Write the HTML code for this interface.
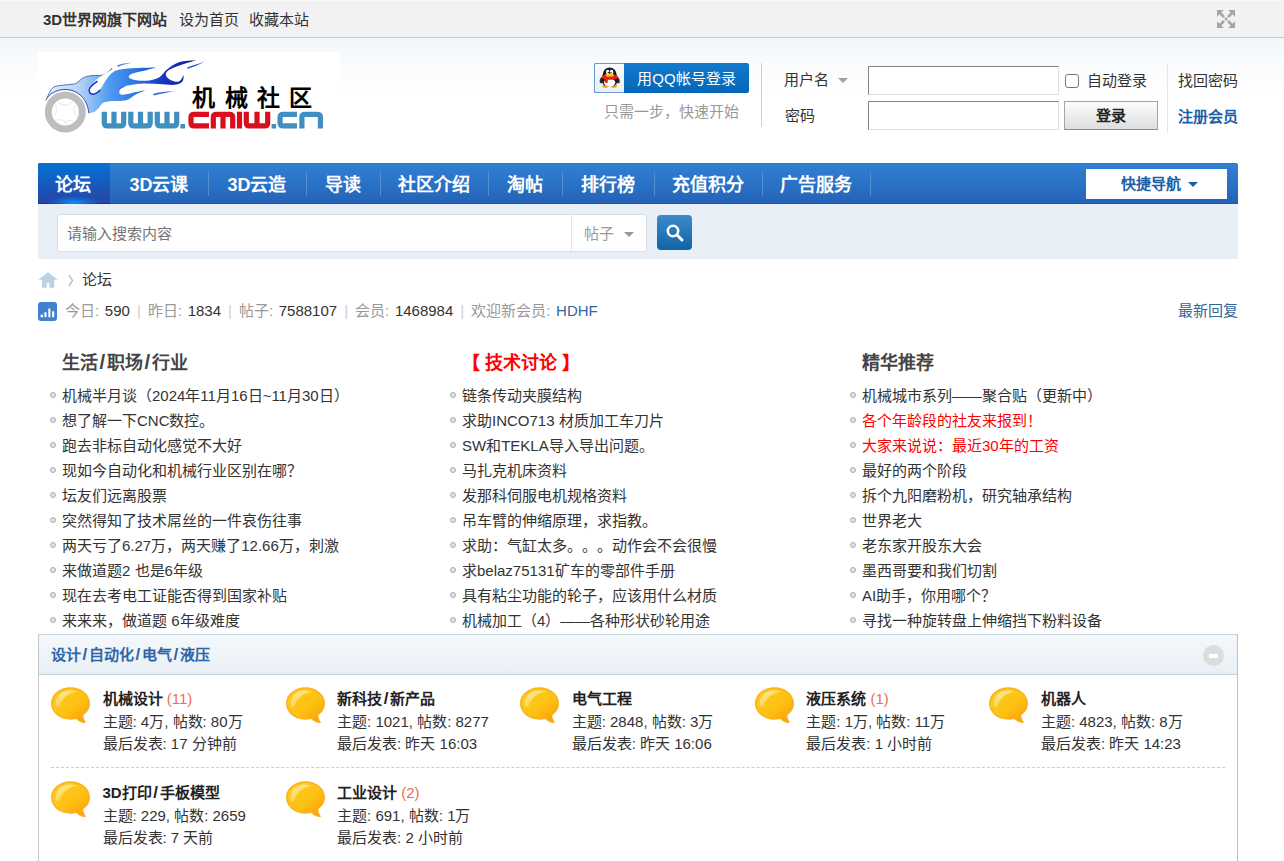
<!DOCTYPE html>
<html lang="zh-CN">
<head>
<meta charset="utf-8">
<title>机械社区</title>
<style>
*{margin:0;padding:0;box-sizing:border-box;}
html,body{width:1284px;height:861px;overflow:hidden;background:#fff;}
body{position:relative;text-spacing-trim:space-all;font-feature-settings:"halt" 0,"chws" 0,"vhal" 0;font-family:"Liberation Sans",sans-serif;font-size:15px;color:#333;line-height:22px;}
a{color:inherit;text-decoration:none;}
.abs{position:absolute;white-space:nowrap;}
b,strong{font-weight:bold;}

/* top bar */
#topbar{position:absolute;left:0;top:0;width:1284px;height:38px;background:#f2f2f2;border-bottom:1px solid #c9c9c9;border-top:1px solid #f8f8f8;}
#topbar .t{position:absolute;top:0;height:36px;line-height:37px;white-space:nowrap;color:#333;}
#hdbg{position:absolute;left:0;top:38px;width:1284px;height:52px;background:linear-gradient(#f3f7fa,#ffffff);}

/* login */
.inp{position:absolute;background:#fff;border:1px solid;border-color:#848484 #e0e0e0 #e0e0e0 #848484;}
.lbl{position:absolute;height:22px;line-height:22px;white-space:nowrap;}

/* nav */
#nav{position:absolute;left:38px;top:163px;width:1200px;height:41px;background:linear-gradient(#2f82d4,#2462b6);border-radius:2px 3px 0 0;box-shadow:inset 0 -1px 0 #1f57a3, inset 0 1px 0 #2b78c8;}
#nav .it{position:absolute;top:0;height:41px;line-height:44px;font-size:18px;font-weight:bold;color:#fff;text-align:center;white-space:nowrap;}
#nav .sep{position:absolute;top:9px;width:1px;height:24px;background:#558fd2;}
#nav .act{background:linear-gradient(#0670d2 0%,#0d65c8 30%,#1c53b7 65%,#2744a7 100%);border-radius:2px 0 0 0;overflow:hidden;box-shadow:inset 0 -1px 0 #1d2f97;}
#nav .act:after{content:"";position:absolute;left:10px;right:10px;bottom:-6px;height:14px;border-radius:50%;background:radial-gradient(ellipse at center,rgba(6,150,255,1),rgba(10,130,240,.5) 40%,rgba(20,110,230,0) 72%);}
#qnav{position:absolute;left:1048px;top:6px;width:141px;height:30px;background:#fff;color:#1f5fa6;font-weight:bold;font-size:15px;line-height:30px;white-space:nowrap;}

/* search */
#scbar{position:absolute;left:38px;top:204px;width:1200px;height:55px;background:#e8eff7;}
#scinput{position:absolute;left:19px;top:10px;width:590px;height:38px;background:#fff;border:1px solid #d5e0e6;border-radius:2px;}

/* lists */
.red{color:#f00;}

/* panel */
#panel{position:absolute;left:38px;top:634px;width:1200px;height:240px;border:1px solid #c2d5e3;border-right-color:#c0c0c0;border-left-color:#c6c6c6;background:#fff;}
#ph{position:absolute;left:0;top:0;width:1198px;height:40px;background:linear-gradient(#f5f8fb,#e8eff4);border-bottom:1px solid #c2d5e3;}

.col{position:absolute;top:349px;width:392px;}
.col h2{margin-left:12px;height:26px;line-height:28px;font-size:18px;font-weight:bold;color:#444;white-space:nowrap;}
.col h2.red{color:#f00;margin-left:12px;}
.col ul{list-style:none;margin-top:8px;}
.col li{position:relative;height:25px;line-height:26px;padding-left:12px;white-space:nowrap;overflow:hidden;color:#333;}
.col li.red{color:#f00;}
.col li i{position:absolute;left:0;top:9px;width:6px;height:6px;border-radius:50%;background:#e2e2e2;border:1px solid #adadad;}
.cell{position:absolute;width:232px;height:80px;}
.cell .bub{position:absolute;left:0;top:0;}
.cell p{margin-left:51.500px;height:22.500px;line-height:22.500px;white-space:nowrap;color:#333;}
.cell p.n{margin-top:1px;}
.cell p b{color:#222;}
.cell p em{font-style:normal;color:#f26c4f;}
#stats .g{padding-right:1.500px;}#stats .d{color:#333;}#stats .p{color:#ccc;padding:0 7px;}
.sl{padding:0 1.600px;font-size:1.130em;line-height:1;}
</style>
</head>
<body>
<svg width="0" height="0" style="position:absolute">
  <defs>
    <linearGradient id="bg1" x1="0.150" y1="0.100" x2="0.900" y2="0.950">
      <stop offset="0" stop-color="#fecb1c"/><stop offset="0.550" stop-color="#fdc112"/><stop offset="1" stop-color="#fb9f0c"/>
    </linearGradient>
    <linearGradient id="bg2" x1="0" y1="0" x2="0.700" y2="1">
      <stop offset="0" stop-color="#fff" stop-opacity=".62"/><stop offset="1" stop-color="#fff" stop-opacity=".12"/>
    </linearGradient>
    <symbol id="bubble" viewBox="0 0 42 38">
      <path d="M19.500 0.300C30.300 0.300 39 7.500 39 16.500C39 21 36.500 25.300 32.300 28.300C32.500 31 33.200 33 34.600 34.800C35 35.600 34.600 36.100 33.800 36C30.800 35.800 27.800 34.600 25.200 32C23.400 32.450 21.400 32.700 19.500 32.700C8.700 32.700 0 25.500 0 16.500S8.700 0.300 19.500 0.300z" fill="#f9b21c"/>
      <path d="M19.500 1.700C29.500 1.700 37.600 8.300 37.600 16.500C37.600 20.700 35.300 24.600 31 27.500C31.100 30.400 31.800 32.600 33 34.400C30.500 34 28 32.800 25.800 30.500C23.800 31 21.600 31.300 19.500 31.300C9.500 31.300 1.400 24.700 1.400 16.500S9.500 1.700 19.500 1.700z" fill="url(#bg1)"/>
      <path d="M5 19.500C3.500 12 8 4.500 18 3.500C21 3.200 24 3.800 26.500 5C19 5.500 12 9 8.500 19C7.500 20.500 5.500 20.500 5 19.500z" fill="url(#bg2)"/>
    </symbol>
  </defs>
</svg>

<div id="topbar">
  <div class="t" style="left:43px;"><b>3D世界网旗下网站</b></div>
  <div class="t" style="left:179px;">设为首页</div>
  <div class="t" style="left:249px;">收藏本站</div>
  <svg style="position:absolute;left:1217px;top:9px" width="18" height="18" viewBox="0 0 18 18">
    <g fill="#a6a6a6" stroke="none">
      <path d="M0 0H6.800L0 6.800Z"/><path d="M18 0V6.800L11.200 0Z"/><path d="M0 18V11.200L6.800 18Z"/><path d="M18 18H11.200L18 11.200Z"/>
      <rect x="7.600" y="7.600" width="2.800" height="2.800"/>
    </g>
    <g stroke="#a6a6a6" stroke-width="2.700" fill="none">
      <path d="M2.500 2.500L7 7"/><path d="M15.500 2.500L11 7"/><path d="M2.500 15.500L7 11"/><path d="M15.500 15.500L11 11"/>
    </g>
  </svg>
</div>
<div id="hdbg"></div>

<!-- LOGO -->
<div id="logo" class="abs" style="left:38px;top:52px;width:302px;height:88px;background:#fff;">
<svg width="302" height="88" viewBox="0 0 302 88">
  <defs>
    <linearGradient id="fl" x1="0" y1="0" x2="1" y2="0">
      <stop offset="0" stop-color="#e6f0fb"/><stop offset="0.220" stop-color="#b5d2f5"/><stop offset="0.420" stop-color="#4e9af2"/><stop offset="0.600" stop-color="#2b74e6"/><stop offset="0.780" stop-color="#1634c2"/><stop offset="1" stop-color="#0a1b9e"/>
    </linearGradient>
  </defs>
  <!-- flame body -->
  <path fill="url(#fl)" d="M9.3 45.4C10.3 43.7 12.0 37.5 15.2 35.4C18.4 33.3 24.8 33.4 28.5 32.8C32.2 32.1 34.8 32.7 37.7 31.5C40.6 30.3 42.8 26.8 45.7 25.5C48.6 24.2 51.7 23.9 55.0 23.5C58.3 23.1 62.3 24.1 65.5 22.9C68.7 21.7 72.8 17.3 74.2 16.2C74.1 16.9 72.3 20.0 73.5 20.2C74.7 20.4 77.9 18.3 81.4 17.6C84.9 16.9 88.5 16.5 94.7 16.2C100.9 15.9 114.5 15.7 118.5 15.6C116.8 16.0 112.0 17.2 108.0 18.2C104.0 19.2 97.6 20.4 94.7 21.5C91.8 22.6 90.7 23.8 90.7 24.8C90.7 25.8 91.8 26.8 94.7 27.5C97.6 28.2 103.6 29.1 108.0 28.8C112.4 28.5 117.5 27.4 121.0 25.5C124.5 23.6 125.7 20.1 129.0 17.6C132.3 15.1 136.1 11.9 141.0 10.3C145.9 8.8 155.3 8.6 158.2 8.3C156.0 9.0 149.4 10.8 145.0 12.3C140.6 13.9 134.6 15.8 131.7 17.6C128.8 19.4 127.6 21.1 127.8 22.9C128.0 24.7 130.8 27.1 133.0 28.2C135.2 29.3 138.9 30.4 141.0 29.5C143.1 28.6 144.9 24.0 145.7 22.9C145.5 24.0 145.8 27.9 144.3 29.5C142.9 31.1 140.9 32.4 137.0 32.8C133.1 33.2 126.3 32.3 121.0 32.1C115.7 31.9 110.8 31.2 105.3 31.5C99.8 31.8 92.2 32.8 88.0 34.0C83.8 35.2 80.7 37.2 80.0 38.7C79.3 40.2 81.5 42.4 84.0 42.7C86.5 43.0 90.7 41.5 94.7 40.7C98.7 39.9 105.8 38.5 108.0 38.0C106.2 38.8 100.6 41.0 97.3 42.7C94.0 44.4 92.2 47.2 88.0 48.3C83.8 49.4 76.1 48.8 72.3 49.3C68.5 49.8 66.9 50.0 65.0 51.0C63.1 52.0 62.4 54.0 61.0 55.5C59.6 57.0 58.1 58.8 56.5 59.8C54.9 60.8 52.2 61.0 51.3 61.3C50.8 59.5 49.9 53.8 48.3 50.7C46.7 47.6 45.0 44.8 41.7 42.7C38.4 40.6 32.9 38.2 28.5 38.0C24.1 37.8 18.4 39.9 15.2 41.4C12.0 42.9 10.3 45.8 9.3 46.7Z"/>
  <path fill="none" stroke="#3552b8" stroke-width="0.800" d="M9.3 45.4C10.3 43.7 12.0 37.5 15.2 35.4C18.4 33.3 24.8 33.4 28.5 32.8C32.2 32.1 34.8 32.7 37.7 31.5C40.6 30.3 42.8 26.8 45.7 25.5C48.6 24.2 51.7 23.9 55.0 23.5C58.3 23.1 62.3 24.1 65.5 22.9C68.7 21.7 72.8 17.3 74.2 16.2"/>
  <!-- inner white band + curl -->
  <path fill="#fff" d="M74 17.500C66 22 56 28 51.500 35C49.500 39 52 42 56 41.500C60 41 63 37 65 33C68 27 72 22 76 19.500Z"/>
  <path fill="none" stroke="#1739c2" stroke-width="1.500" stroke-linecap="round" d="M59 29.500C53.500 33 49.800 37 51.600 40.500C53.800 43.800 59 41.800 61.800 38.300"/>
  <path fill="none" stroke="#2a6fe0" stroke-width="1.200" stroke-linecap="round" d="M86 34.500C81.500 36 79.500 38.500 81 41"/>
  <!-- fender line -->
  <path fill="none" stroke="#2a3fa8" stroke-width="0.900" d="M7.800 48.300C10.500 42 18 37.600 27 37.400C41 37.600 49.800 48 50.800 61.300"/>
  <!-- wisps -->
  <path fill="#5b86d8" d="M79 13.500C83 11.500 89 11 94 10.500C89 12 84 12.500 80 15Z"/>
  <path fill="#3a62cc" d="M115 42C121 40 128 39.500 136 39.500C129 40.500 122 41.500 116 43.500Z"/>
  <path fill="#3a5cc8" d="M149 15.500C155 13 161 12 166 9.500C162 13 155 14.500 150 17Z"/>
  <!-- wheel -->
  <circle cx="27.300" cy="60" r="17.050" fill="#fff" stroke="#bdbdbd" stroke-width="6.900"/>
  <g fill="none" stroke="#ebebeb" stroke-width="1.100">
    <path d="M20.500 50.500C24 54 30.500 54 34 50.500"/>
    <path d="M37.500 53.500C34.500 57.500 36.500 63.500 40 65"/>
    <path d="M36 70C32 67 27 69 25.500 72.500"/>
    <path d="M29.500 72.500C27.500 68 22 66.500 17.500 68.500"/>
    <path d="M15 64C19 62 20 56 17 52.500"/>
  </g>
  <!-- www. -->
  <g fill="none" stroke="#3f8fc0" stroke-width="5.200" stroke-linejoin="round">
    <path d="M66.300 59.700V71Q66.300 73.900 69.500 73.900H82.500Q85.700 73.900 85.700 71V59.700M76 59.700V73.900"/>
    <path d="M92.800 59.700V71Q92.800 73.900 96 73.900H109Q112.200 73.900 112.200 71V59.700M102.500 59.700V73.900"/>
    <path d="M119.300 59.700V71Q119.300 73.900 122.500 73.900H135.500Q138.700 73.900 138.700 71V59.700M129 59.700V73.900"/>
  </g>
  <rect x="142.500" y="72" width="4.500" height="4.500" fill="#3f8fc0"/>
  <!-- cmiw -->
  <g fill="none" stroke="#d90f1f" stroke-width="5.200" stroke-linejoin="round">
    <path d="M171 62.300H156.200Q153 62.300 153 65.200V71Q153 73.900 156.200 73.900H171"/>
    <path d="M175.300 76.500V65.200Q175.300 62.300 178.500 62.300H191.500Q194.700 62.300 194.700 65.200V76.500M185 62.300V76.500"/>
    <path d="M201.500 59.700V76.500"/>
    <path d="M208.300 59.700V71Q208.300 73.900 211.500 73.900H226.500Q229.700 73.900 229.700 71V59.700M219 59.700V73.900"/>
  </g>
  <rect x="233.600" y="72" width="4.500" height="4.500" fill="#3f8fc0"/>
  <!-- cn -->
  <g fill="none" stroke="#3f8fc0" stroke-width="5.200" stroke-linejoin="round">
    <path d="M259 62.300H245.300Q242.100 62.300 242.100 65.200V71Q242.100 73.900 245.300 73.900H259"/>
    <path d="M263.900 76.500V65.200Q263.900 62.300 267.100 62.300H279.200Q282.400 62.300 282.400 65.200V76.500"/>
  </g>
  <text x="154.300" y="54.300" font-family="Liberation Sans, sans-serif" font-weight="bold" font-size="23" letter-spacing="9.400" fill="#000">机械社区</text>
</svg>
</div>

<!-- QQ login -->
<div class="abs" id="qq" style="left:594px;top:63px;width:155px;height:30px;border-radius:2px;background:linear-gradient(#127acd,#0666b8);overflow:hidden;">
  <div style="position:absolute;left:30px;top:0;width:125px;height:30px;line-height:31.500px;text-align:center;color:#fff;font-size:15px;">用QQ帐号登录</div>
  <div style="position:absolute;left:0;top:0;width:30px;height:30px;background:linear-gradient(#f9fbfd,#e7eff6);border:1px solid #6a9ccb;border-right:0;border-radius:2px 0 0 2px;">
    <svg width="29" height="28" viewBox="0 0 29 28">
      <ellipse cx="10.600" cy="21.700" rx="3.100" ry="2" fill="#f3a400"/><ellipse cx="18.800" cy="21.700" rx="3.100" ry="2" fill="#f3a400"/>
      <ellipse cx="6.700" cy="16.200" rx="1.900" ry="3.200" fill="#2a2a30" transform="rotate(14 6.700 16.200)"/>
      <ellipse cx="22.700" cy="16.200" rx="1.900" ry="3.200" fill="#2a2a30" transform="rotate(-14 22.700 16.200)"/>
      <path d="M14.700 3.600C18.600 3.600 21.300 6.600 21.500 10.500C22.600 13 22.900 16 22.200 18.500C21.300 21.300 18.500 22.600 14.700 22.600S8.100 21.300 7.200 18.500C6.500 16 6.800 13 7.900 10.500C8.100 6.600 10.800 3.600 14.700 3.600z" fill="#1b1b20"/>
      <ellipse cx="14.600" cy="18.600" rx="5.700" ry="4.200" fill="#fff"/>
      <path d="M7.600 10.600C11.500 12.600 17.900 12.600 21.800 10.600C22.500 11.800 22.800 13 22.600 14.200C18.500 16.300 11 16.400 6.900 14.200C6.700 13 7 11.800 7.600 10.600z" fill="#ee1c12"/>
      <path d="M9.800 14.800L13 15.400L12.600 19L9.600 18.400z" fill="#ee1c12"/>
      <ellipse cx="12.700" cy="8" rx="1.700" ry="2.200" fill="#fff"/><ellipse cx="16.600" cy="8" rx="1.700" ry="2.200" fill="#fff"/>
      <circle cx="13.300" cy="8.400" r="0.750" fill="#111"/><circle cx="16" cy="8.400" r="0.750" fill="#111"/>
      <ellipse cx="14.700" cy="11.300" rx="4.600" ry="1.500" fill="#f6a800"/>
      <ellipse cx="14.700" cy="10.900" rx="3.600" ry="0.800" fill="#ffc933"/>
    </svg>
  </div>
</div>
<div class="lbl" style="left:604px;top:101px;color:#999;">只需一步，快速开始</div>
<div class="abs" style="left:761px;top:63px;width:1px;height:64px;background:#cfcfcf;"></div>

<div class="lbl" style="left:784px;top:69px;">用户名</div>
<div class="abs" style="left:838px;top:78px;width:0;height:0;border-left:5px solid transparent;border-right:5px solid transparent;border-top:5px solid #a0a0a0;"></div>
<div class="lbl" style="left:785px;top:105px;">密码</div>
<div class="inp" style="left:868px;top:66px;width:191px;height:29px;"></div>
<div class="inp" style="left:868px;top:101px;width:191px;height:29px;"></div>
<div class="abs" style="left:1065px;top:74px;width:14px;height:14px;border:1px solid #767676;border-radius:3px;background:#fff;"></div>
<div class="lbl" style="left:1087px;top:70px;">自动登录</div>
<div class="abs" style="left:1064px;top:101px;width:94px;height:29px;border:1px solid #a5a5a5;border-bottom-color:#8a8a8a;background:linear-gradient(#fdfdfd,#dedede);text-align:center;line-height:27px;font-weight:bold;color:#222;">登录</div>
<div class="abs" style="left:1167px;top:63px;width:1px;height:70px;background:#dfe7ee;"></div>
<div class="lbl" style="left:1178px;top:70px;">找回密码</div>
<div class="lbl" style="left:1178px;top:106px;color:#1c5fa8;font-weight:bold;">注册会员</div>

<!-- NAV -->
<div id="nav">
  <div class="it act" style="left:0;width:72px;padding-right:2px;">论坛</div>
  <div class="it" style="left:72px;width:98px;">3D云课</div>
  <div class="it" style="left:170px;width:98px;">3D云造</div>
  <div class="it" style="left:268px;width:74px;">导读</div>
  <div class="it" style="left:342px;width:108px;">社区介绍</div>
  <div class="it" style="left:450px;width:74px;">淘帖</div>
  <div class="it" style="left:524px;width:92px;">排行榜</div>
  <div class="it" style="left:616px;width:108px;">充值积分</div>
  <div class="it" style="left:724px;width:108px;">广告服务</div>
  <div class="sep" style="left:170px;"></div>
  <div class="sep" style="left:268px;"></div>
  <div class="sep" style="left:342px;"></div>
  <div class="sep" style="left:450px;"></div>
  <div class="sep" style="left:524px;"></div>
  <div class="sep" style="left:616px;"></div>
  <div class="sep" style="left:724px;"></div>
  <div class="sep" style="left:832px;"></div>
  <div id="qnav"><span style="position:absolute;left:35px;">快捷导航</span><span style="position:absolute;left:102px;top:13px;width:0;height:0;border-left:5px solid transparent;border-right:5px solid transparent;border-top:5px solid #1f5fa6;"></span></div>
</div>

<!-- SEARCH -->
<div id="scbar">
  <div id="scinput">
    <div class="abs" style="left:9px;top:0;height:35px;line-height:38px;color:#757575;">请输入搜索内容</div>
    <div class="abs" style="left:513px;top:0;width:1px;height:36px;background:#dfe6ea;"></div>
    <div class="abs" style="left:526px;top:0;height:35px;line-height:38px;color:#999;">帖子</div>
    <div class="abs" style="left:566px;top:17px;width:0;height:0;border-left:5px solid transparent;border-right:5px solid transparent;border-top:5px solid #999;"></div>
  </div>
  <div class="abs" style="left:619px;top:11px;width:35px;height:35px;border-radius:4px;background:linear-gradient(#3c8bcb,#0f65a6);">
    <svg width="35" height="35" viewBox="0 0 35 35"><circle cx="16" cy="16" r="5.200" fill="none" stroke="#fff" stroke-width="2.600"/><path d="M19.800 19.800L25 25" stroke="#fff" stroke-width="3" stroke-linecap="round"/></svg>
  </div>
</div>

<!-- BREADCRUMB -->
<svg class="abs" style="left:38px;top:272px" width="20" height="16" viewBox="0 0 20 16"><path d="M10 0.200L0.200 7.700H4V15.700H8.800V10.700H11.300V15.700H16.200V7.700H19.800z" fill="#bcd1e2"/></svg>
<div class="abs" style="left:67.500px;top:270.500px;height:22px;line-height:22px;color:#999;font-size:12px;">〉</div>
<div class="abs" style="left:82px;top:269px;height:22px;line-height:22px;">论坛</div>

<!-- STATS -->
<div class="abs" style="left:38px;top:302px;width:19px;height:19px;border-radius:3px;background:#4081d2;">
  <svg width="19" height="19" viewBox="0 0 19 19"><g fill="#fff"><rect x="2.600" y="12.700" width="2.400" height="2.500"/><rect x="6.400" y="10.300" width="2.100" height="4.900"/><rect x="10.300" y="6.500" width="2.100" height="8.700"/><rect x="14.100" y="9.300" width="2.100" height="5.900"/></g></svg>
</div>
<div class="abs" id="stats" style="left:65px;top:300px;height:22px;line-height:22px;color:#999;"><span class="g">今日: </span><span class="d">590</span><span class="p">|</span><span class="g">昨日: </span><span class="d">1834</span><span class="p">|</span><span class="g">帖子: </span><span class="d">7588107</span><span class="p">|</span><span class="g">会员: </span><span class="d">1468984</span><span class="p">|</span><span class="g">欢迎新会员: </span><span style="color:#336699">HDHF</span></div>
<div class="abs" style="left:1178px;top:300px;height:22px;line-height:22px;color:#336699;">最新回复</div>

<!-- COLUMNS -->
<div class="col" style="left:50px;">
  <h2 class="colh2 ">生活<span class="sl">/</span>职场<span class="sl">/</span>行业</h2>
  <ul>
    <li><i></i>机械半月谈（2024年11月16日~11月30日）</li>
    <li><i></i>想了解一下CNC数控。</li>
    <li><i></i>跑去非标自动化感觉不大好</li>
    <li><i></i>现如今自动化和机械行业区别在哪？</li>
    <li><i></i>坛友们远离股票</li>
    <li><i></i>突然得知了技术屌丝的一件哀伤往事</li>
    <li><i></i>两天亏了6.27万，两天赚了12.66万，刺激</li>
    <li><i></i>来做道题2 也是6年级</li>
    <li><i></i>现在去考电工证能否得到国家补贴</li>
    <li><i></i>来来来，做道题 6年级难度</li>
  </ul>
</div>
<div class="col" style="left:450px;">
  <h2 class="colh2 red">【 技术讨论 】</h2>
  <ul>
    <li><i></i>链条传动夹膜结构</li>
    <li><i></i>求助INCO713 材质加工车刀片</li>
    <li><i></i>SW和TEKLA导入导出问题。</li>
    <li><i></i>马扎克机床资料</li>
    <li><i></i>发那科伺服电机规格资料</li>
    <li><i></i>吊车臂的伸缩原理，求指教。</li>
    <li><i></i>求助：气缸太多。。。动作会不会很慢</li>
    <li><i></i>求belaz75131矿车的零部件手册</li>
    <li><i></i>具有粘尘功能的轮子，应该用什么材质</li>
    <li><i></i>机械加工（4）——各种形状砂轮用途</li>
  </ul>
</div>
<div class="col" style="left:850px;">
  <h2 class="colh2 ">精华推荐</h2>
  <ul>
    <li><i></i>机械城市系列——聚合贴（更新中）</li>
    <li class="red"><i></i>各个年龄段的社友来报到！</li>
    <li class="red"><i></i>大家来说说：最近30年的工资</li>
    <li><i></i>最好的两个阶段</li>
    <li><i></i>拆个九阳磨粉机，研究轴承结构</li>
    <li><i></i>世界老大</li>
    <li><i></i>老东家开股东大会</li>
    <li><i></i>墨西哥要和我们切割</li>
    <li><i></i>AI助手，你用哪个？</li>
    <li><i></i>寻找一种旋转盘上伸缩挡下粉料设备</li>
  </ul>
</div>

<!-- PANEL -->
<div id="panel">
  <div id="ph">
    <div class="abs" style="left:12px;top:0;height:40px;line-height:40px;font-weight:bold;color:#2b65a8;">设计<span class="sl">/</span>自动化<span class="sl">/</span>电气<span class="sl">/</span>液压</div>
    <div class="abs" style="left:1164px;top:10px;width:21px;height:21px;border-radius:50%;background:#dcdcdc;"><div style="position:absolute;left:6px;top:8.500px;width:9px;height:4px;background:#fff;"></div></div>
  </div>
  <div class="abs" style="left:12px;top:132px;width:1174px;height:0;border-top:1px dashed #cdcdcd;"></div>
  <div class="cell" style="left:12.0px;top:52px;">
    <svg class="bub" width="42" height="38" viewBox="0 0 42 38"><use href="#bubble"/></svg>
    <p class="n"><b>机械设计</b> <em>(11)</em></p><p>主题: 4万, 帖数: 80万</p><p>最后发表: 17 分钟前</p>
  </div>
  <div class="cell" style="left:246.6px;top:52px;">
    <svg class="bub" width="42" height="38" viewBox="0 0 42 38"><use href="#bubble"/></svg>
    <p class="n"><b>新科技<span class="sl">/</span>新产品</b></p><p>主题: 1021, 帖数: 8277</p><p>最后发表: 昨天 16:03</p>
  </div>
  <div class="cell" style="left:481.2px;top:52px;">
    <svg class="bub" width="42" height="38" viewBox="0 0 42 38"><use href="#bubble"/></svg>
    <p class="n"><b>电气工程</b></p><p>主题: 2848, 帖数: 3万</p><p>最后发表: 昨天 16:06</p>
  </div>
  <div class="cell" style="left:715.8px;top:52px;">
    <svg class="bub" width="42" height="38" viewBox="0 0 42 38"><use href="#bubble"/></svg>
    <p class="n"><b>液压系统</b> <em>(1)</em></p><p>主题: 1万, 帖数: 11万</p><p>最后发表: 1 小时前</p>
  </div>
  <div class="cell" style="left:950.4px;top:52px;">
    <svg class="bub" width="42" height="38" viewBox="0 0 42 38"><use href="#bubble"/></svg>
    <p class="n"><b>机器人</b></p><p>主题: 4823, 帖数: 8万</p><p>最后发表: 昨天 14:23</p>
  </div>
  <div class="cell" style="left:12.0px;top:146px;">
    <svg class="bub" width="42" height="38" viewBox="0 0 42 38"><use href="#bubble"/></svg>
    <p class="n"><b>3D打印<span class="sl">/</span>手板模型</b></p><p>主题: 229, 帖数: 2659</p><p>最后发表: 7 天前</p>
  </div>
  <div class="cell" style="left:246.6px;top:146px;">
    <svg class="bub" width="42" height="38" viewBox="0 0 42 38"><use href="#bubble"/></svg>
    <p class="n"><b>工业设计</b> <em>(2)</em></p><p>主题: 691, 帖数: 1万</p><p>最后发表: 2 小时前</p>
  </div>
</div>

</body>
</html>
